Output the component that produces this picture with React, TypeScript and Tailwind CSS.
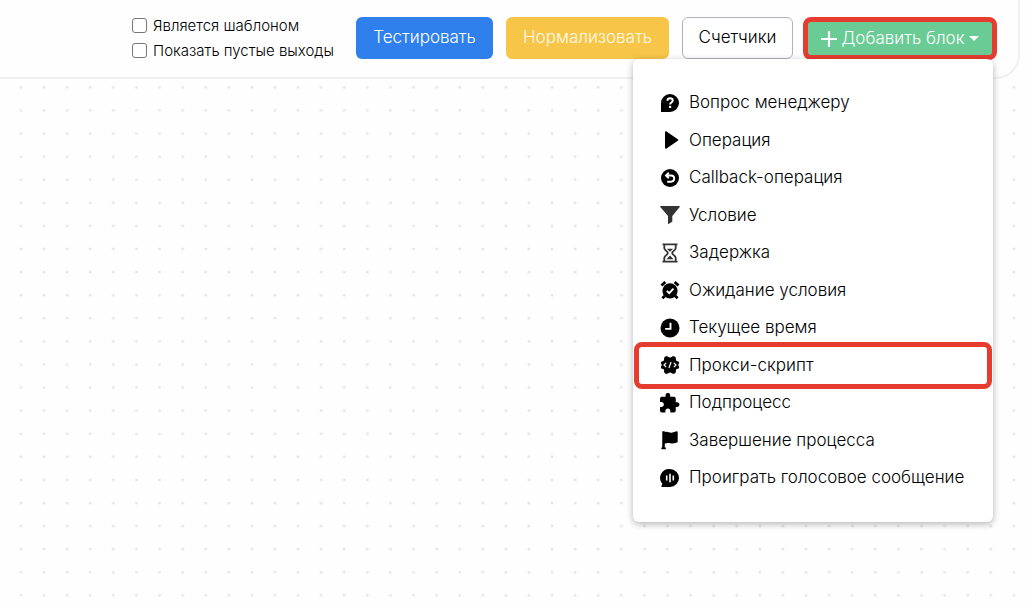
import { useState, type ReactNode } from "react";

type MenuItem = {
  label: string;
  icon: ReactNode;
  highlighted?: boolean;
};

const items: MenuItem[] = [
  {
    label: "Вопрос менеджеру",
    icon: (
      <>
        <path d="M10 1a9 9 0 1 1 0 18H1.5a.6.6 0 0 1-.5-.6V10a9 9 0 0 1 9-9z" fill="currentColor" />
        <path d="M7.4 7.8c0-3.4 5.3-3.2 5.3-.2 0 1.9-2.6 1.8-2.6 3.8" fill="none" stroke="#fff" strokeWidth="2" />
        <rect x="9" y="12.8" width="2.2" height="2.2" fill="#fff" />
      </>
    ),
  },
  {
    label: "Операция",
    icon: <path d="M5 2.2c0-.9.8-1.3 1.5-.8l11.3 7.8c.6.4.6 1.2 0 1.6L6.5 18.6c-.7.5-1.5.1-1.5-.8z" fill="currentColor" />,
  },
  {
    label: "Callback-операция",
    icon: (
      <>
        <circle cx="10" cy="10" r="9" fill="currentColor" />
        <path d="M8.8 4.8 6 7.5l2.8 2.7M6.2 7.5h4.9a3.1 3.1 0 0 1 0 6.2H7.2" fill="none" stroke="#fff" strokeWidth="1.9" />
      </>
    ),
  },
  {
    label: "Условие",
    icon: <path d="M.8 1h18.4c.7 0 .9.6.5 1.1L12.3 11v5.7L8 19.3V11L.3 2.1C-.1 1.6.1 1 .8 1z" fill="#333" />,
  },
  {
    label: "Задержка",
    icon: (
      <>
        <path
          d="M2.5 1.4h15M2.5 18.6h15M4.3 2v3.2c0 2 3.6 3.2 3.6 4.8s-3.6 2.8-3.6 4.8V18M15.7 2v3.2c0 2-3.6 3.2-3.6 4.8s3.6 2.8 3.6 4.8V18"
          fill="none"
          stroke="#333"
          strokeWidth="1.8"
        />
        <path d="M6.8 5.8h6.4L10 8.8zM10 12.5l3.5 3.7h-7z" fill="#333" />
      </>
    ),
  },
  {
    label: "Ожидание условия",
    icon: (
      <>
        <circle cx="10" cy="10.8" r="7.6" fill="currentColor" />
        <path d="M1.5 5.6 5.3 2M18.5 5.6 14.7 2M4.6 16l-2.2 2.2M15.4 16l2.2 2.2" stroke="currentColor" strokeWidth="2.8" />
        <path d="m6.8 10.8 2.4 2.4 4.3-4.5" fill="none" stroke="#fff" strokeWidth="1.9" />
      </>
    ),
  },
  {
    label: "Текущее время",
    icon: (
      <>
        <circle cx="10" cy="10" r="9.5" fill="currentColor" />
        <path d="M10.5 4.8v6.1H5.2" fill="none" stroke="#fff" strokeWidth="1.9" />
      </>
    ),
  },
  {
    label: "Прокси-скрипт",
    highlighted: true,
    icon: (
      <>
        <path
          d="M5.8 1.3h1.4c.9 0 1.2 1.3 2.8 1.3s1.9-1.3 2.8-1.3h1.4c1.3.5 2 1.7 1.7 3.2 0 1.3.8 1.7 2 1.8 1.3.3 1.6 1.9.7 2.8-.5.6-.5 1.2 0 1.8.9 1 .6 2.5-.7 2.8-1.2.1-2 .6-2 1.8.3 1.5-.4 2.7-1.7 3.2h-1.4c-.9 0-1.2-1.3-2.8-1.3s-1.9 1.3-2.8 1.3H5.8c-1.3-.5-2-1.7-1.7-3.2 0-1.2-.8-1.7-2-1.8-1.3-.3-1.6-1.8-.7-2.8.5-.6.5-1.2 0-1.8-.9-.9-.6-2.5.7-2.8 1.2-.1 2-.5 2-1.8-.3-1.5.4-2.7 1.7-3.2z"
          fill="currentColor"
        />
        <path d="M6.2 7.8 4 10l2.2 2.2M13.8 7.8 16 10l-2.2 2.2M11.1 7l-2.2 6" fill="none" stroke="#fff" strokeWidth="1.2" />
      </>
    ),
  },
  {
    label: "Подпроцесс",
    icon: (
      <path
        transform="translate(-1.9 -1) scale(.93)"
        d="M20.5 11H19V7c0-1.1-.9-2-2-2h-4V3.5C13 2.12 11.88 1 10.5 1S8 2.12 8 3.5V5H4c-1.1 0-1.99.9-1.99 2v3.8H3.5c1.49 0 2.7 1.21 2.7 2.7s-1.21 2.7-2.7 2.7H2V20c0 1.1.9 2 2 2h3.8v-1.5c0-1.49 1.21-2.7 2.7-2.7 1.49 0 2.7 1.21 2.7 2.7V22H17c1.1 0 2-.9 2-2v-4h1.5c1.38 0 2.5-1.12 2.5-2.5S21.88 11 20.5 11z"
        fill="currentColor"
      />
    ),
  },
  {
    label: "Завершение процесса",
    icon: (
      <path
        d="M2.3 1.2h2.5v1.1C8 .8 9.5 3.5 12.5 2.4l4.2-1.2c.6-.1 1 .2 1 .7v9.6c0 .6-.3.9-.8 1.1-6.4 2.3-6.7-1-12.1.9v4h1v1.7H2.2c-1.3 0-1.3-1.7 0-1.9z"
        fill="currentColor"
      />
    ),
  },
  {
    label: "Проиграть голосовое сообщение",
    icon: (
      <>
        <path d="M10 1a9 9 0 1 1 0 18H2.3c-1 0-1.2-.6-.8-1.2l.9-1.9A9 9 0 0 1 10 1z" fill="currentColor" />
        <path d="M6.7 7.5v5M10 5.8v8.4M13.3 7.5v5" stroke="#fff" strokeWidth="1.6" />
      </>
    ),
  },
];

function Option({ id, label }: { id: string; label: string }) {
  return (
    <div className="flex items-center gap-1.5">
      <input
        id={id}
        type="checkbox"
        className="size-[15px] shrink-0 appearance-none rounded-[3px] border border-[#777] bg-white checked:bg-[#2f80ed]"
      />
      <label htmlFor={id} className="text-[15px] leading-[25px] whitespace-nowrap">
        {label}
      </label>
    </div>
  );
}

function AddBlockMenu() {
  return (
    <ul className="absolute top-full right-1 z-10 -mt-px w-[360px] rounded-md bg-white py-[25px] text-black shadow-[0_2px_7px_rgba(0,0,0,0.3)]">
      {items.map((item) => (
        <li key={item.label} className="relative">
          <button className="flex w-full items-center gap-[9px] py-1.5 pl-[27px] text-left text-[17px] leading-normal whitespace-nowrap">
            <svg viewBox="0 0 20 20" className="size-5 shrink-0" aria-hidden="true">
              {item.icon}
            </svg>
            {item.label}
          </button>
          {item.highlighted && (
            <span className="pointer-events-none absolute inset-x-px -inset-y-[5px] rounded-lg border-5 border-[#e63c30]" />
          )}
        </li>
      ))}
    </ul>
  );
}

export default function App() {
  const [open, setOpen] = useState(true);

  return (
    <div className="relative isolate min-h-screen bg-[#fefefe] font-[Inter,sans-serif] font-light text-black">
      {/* dotted canvas */}
      <svg className="absolute inset-0 -z-10 h-full w-full" aria-hidden="true">
        <defs>
          <pattern id="dots" x="9.5" y="6.5" width="23.09" height="23.09" patternUnits="userSpaceOnUse">
            <circle cx="11.5" cy="11.5" r="1.5" fill="#e6e6e6" />
          </pattern>
        </defs>
        <rect width="100%" height="100%" fill="url(#dots)" />
      </svg>

      <header className="mr-3 flex items-start justify-end rounded-br-3xl border-r-2 border-b-2 border-[#f0f0f0] bg-[#fefefe] pt-[17px] pr-[21px] pb-[17px]">
        <div className="-my-1 mr-[22px]">
          <Option id="template" label="Является шаблоном" />
          <Option id="empty-outputs" label="Показать пустые выходы" />
        </div>
        <div className="flex gap-[13px]">
          <button className="h-[42px] w-[137px] rounded-md bg-[#2f80ed] text-[17px] text-white">Тестировать</button>
          <button className="h-[42px] w-[163px] rounded-md bg-[#f7c548] text-[17px] text-[#fffbe8]">Нормализовать</button>
          <button className="h-[42px] w-[111px] rounded-md border border-[#b3b1c0] bg-white text-[17px]">Счетчики</button>
        </div>
        <div className="relative ml-2.5">
          <button
            onClick={() => setOpen(!open)}
            aria-expanded={open}
            className="flex h-[43px] w-[194px] items-center justify-center rounded-lg border-5 border-[#e63c30] bg-[#6acb95] text-[17px] whitespace-nowrap text-white"
          >
            <svg viewBox="0 0 16 16" className="mr-1 size-4" aria-hidden="true">
              <path d="M8 1v14M1 8h14" stroke="currentColor" strokeWidth="2.2" strokeLinecap="round" />
            </svg>
            Добавить блок
            <svg viewBox="0 0 10 5" className="ml-1 h-[5px] w-2.5" aria-hidden="true">
              <path d="M0 0h10L5 5z" fill="currentColor" />
            </svg>
          </button>
          {open && <AddBlockMenu />}
        </div>
      </header>
    </div>
  );
}
